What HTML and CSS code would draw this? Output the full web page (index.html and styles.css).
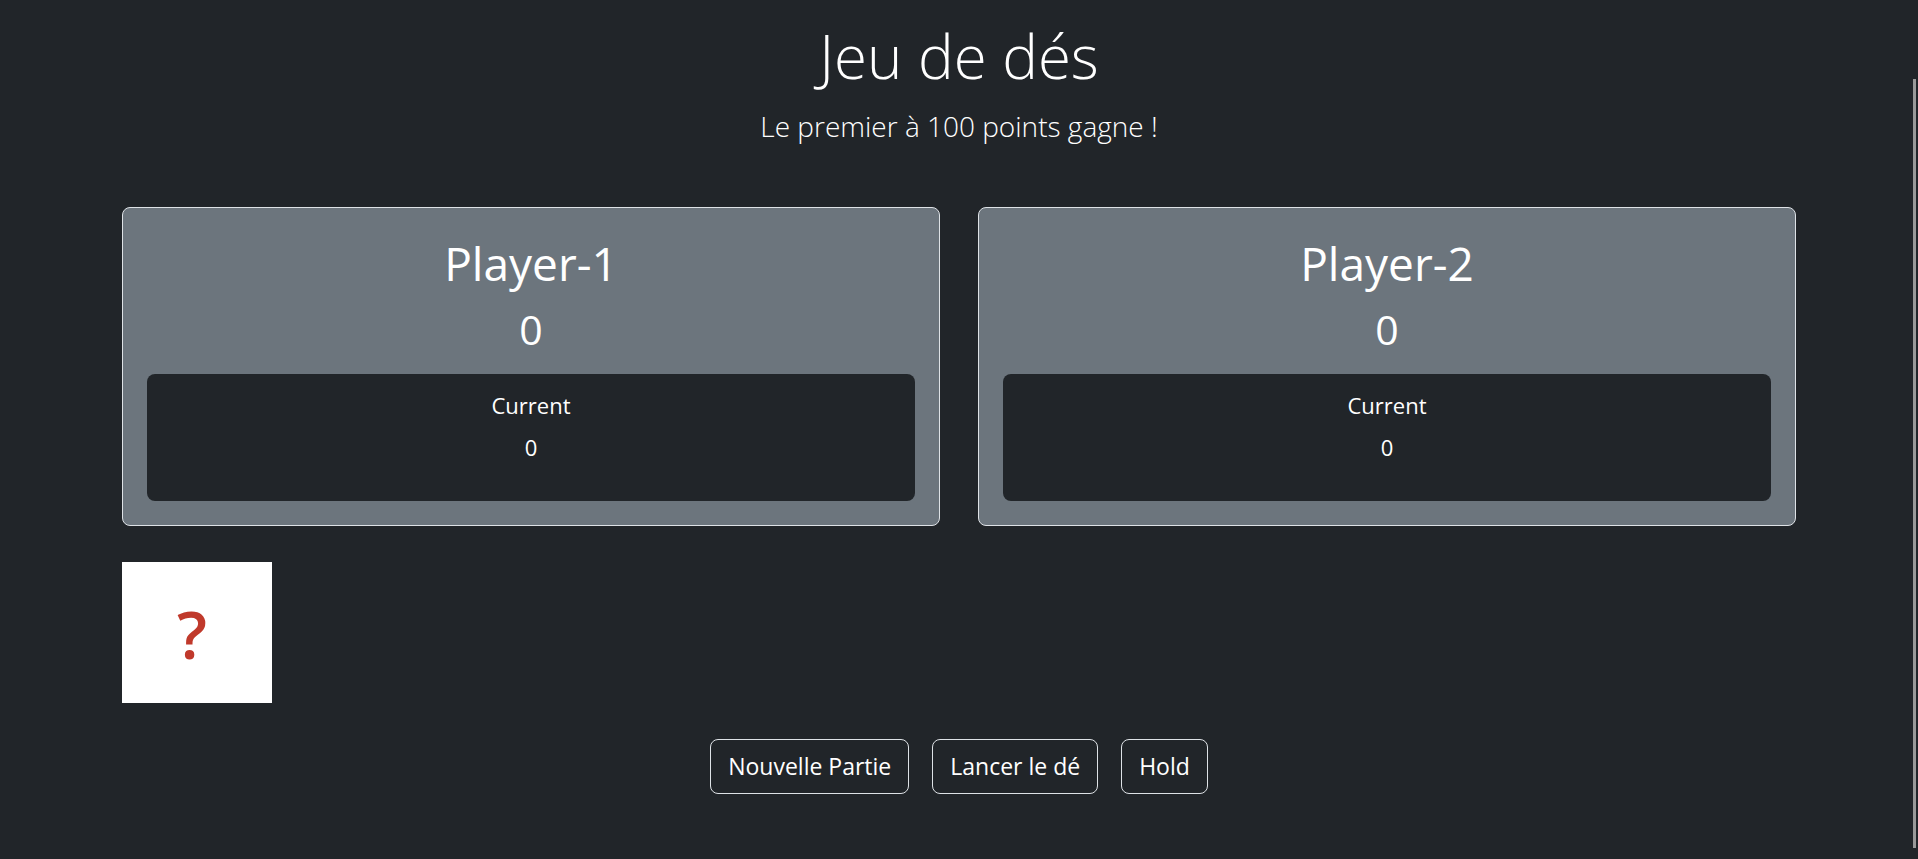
FILE: index.html
```html
<!DOCTYPE html>
<html lang="fr">
<head>
<meta charset="utf-8">
<title>Jeu de dés</title>
<link rel="stylesheet" href="styles.css">
</head>
<body>
<main class="page">
  <header class="header">
    <h1 class="title">Jeu de dés</h1>
    <p class="subtitle">Le premier à 100 points gagne !</p>
  </header>
  <section class="container">
    <div class="players">
      <div class="player">
        <h2 class="player-name">Player-1</h2>
        <div class="player-score">0</div>
        <div class="current">
          <p class="current-label">Current</p>
          <p class="current-value">0</p>
        </div>
      </div>
      <div class="player">
        <h2 class="player-name">Player-2</h2>
        <div class="player-score">0</div>
        <div class="current">
          <p class="current-label">Current</p>
          <p class="current-value">0</p>
        </div>
      </div>
    </div>
    <div class="dice"><span class="dice-mark">?</span></div>
    <div class="actions">
      <button class="btn">Nouvelle Partie</button>
      <button class="btn">Lancer le dé</button>
      <button class="btn">Hold</button>
    </div>
  </section>
</main>
<div class="scroll-thumb"></div>
</body>
</html>
```
FILE: styles.css
```css
html, body {
  margin: 0;
  padding: 0;
  background: #212529;
  color: #fff;
  font-family: "Open Sans", "Noto Sans", sans-serif;
}

.page {
  padding-top: 20px;
}

.header {
  text-align: center;
}

.title {
  margin: 0;
  font-size: 60px;
  font-weight: 300;
  line-height: 72px;
}

.subtitle {
  margin: 13px 0 0;
  font-size: 28px;
  font-weight: 300;
  line-height: 42px;
}

.container {
  width: 1674px;
  margin: 0 auto;
}

.players {
  display: grid;
  grid-template-columns: 1fr 1fr;
  gap: 38px;
  margin-top: 60px;
}

.player {
  background: #6c757d;
  border: 1px solid #dee2e6;
  border-radius: 8px;
  padding: 28px 24px 24px;
  text-align: center;
}

.player-name {
  margin: 0;
  font-size: 46px;
  font-weight: 400;
  line-height: 1.2;
}

.player-score {
  font-size: 41px;
  line-height: 1.2;
  margin-top: 14px;
}

.current {
  background: #212529;
  border-radius: 8px;
  margin-top: 20px;
  padding: 15px 0 37px;
}

.current-label,
.current-value {
  margin: 0;
  font-size: 22px;
  line-height: 1.5;
}

.current-value {
  margin-top: 9px;
}

.dice {
  width: 150px;
  height: 141px;
  background: #fff;
  margin-top: 36px;
  display: flex;
  align-items: center;
  justify-content: center;
}

.dice-mark {
  color: #c0392b;
  font-size: 66px;
  font-weight: 600;
  line-height: 1;
  margin-left: -10px;
}

.actions {
  display: flex;
  justify-content: center;
  gap: 23px;
  margin-top: 36px;
}

.btn {
  font-family: inherit;
  font-size: 23px;
  color: #fff;
  background: transparent;
  border: 1px solid #dee2e6;
  border-radius: 8px;
  padding: 8px 17px;
  line-height: 1.6;
}

.scroll-thumb {
  position: fixed;
  top: 79px;
  right: 2px;
  width: 3px;
  height: 769px;
  background: #999;
}
```
